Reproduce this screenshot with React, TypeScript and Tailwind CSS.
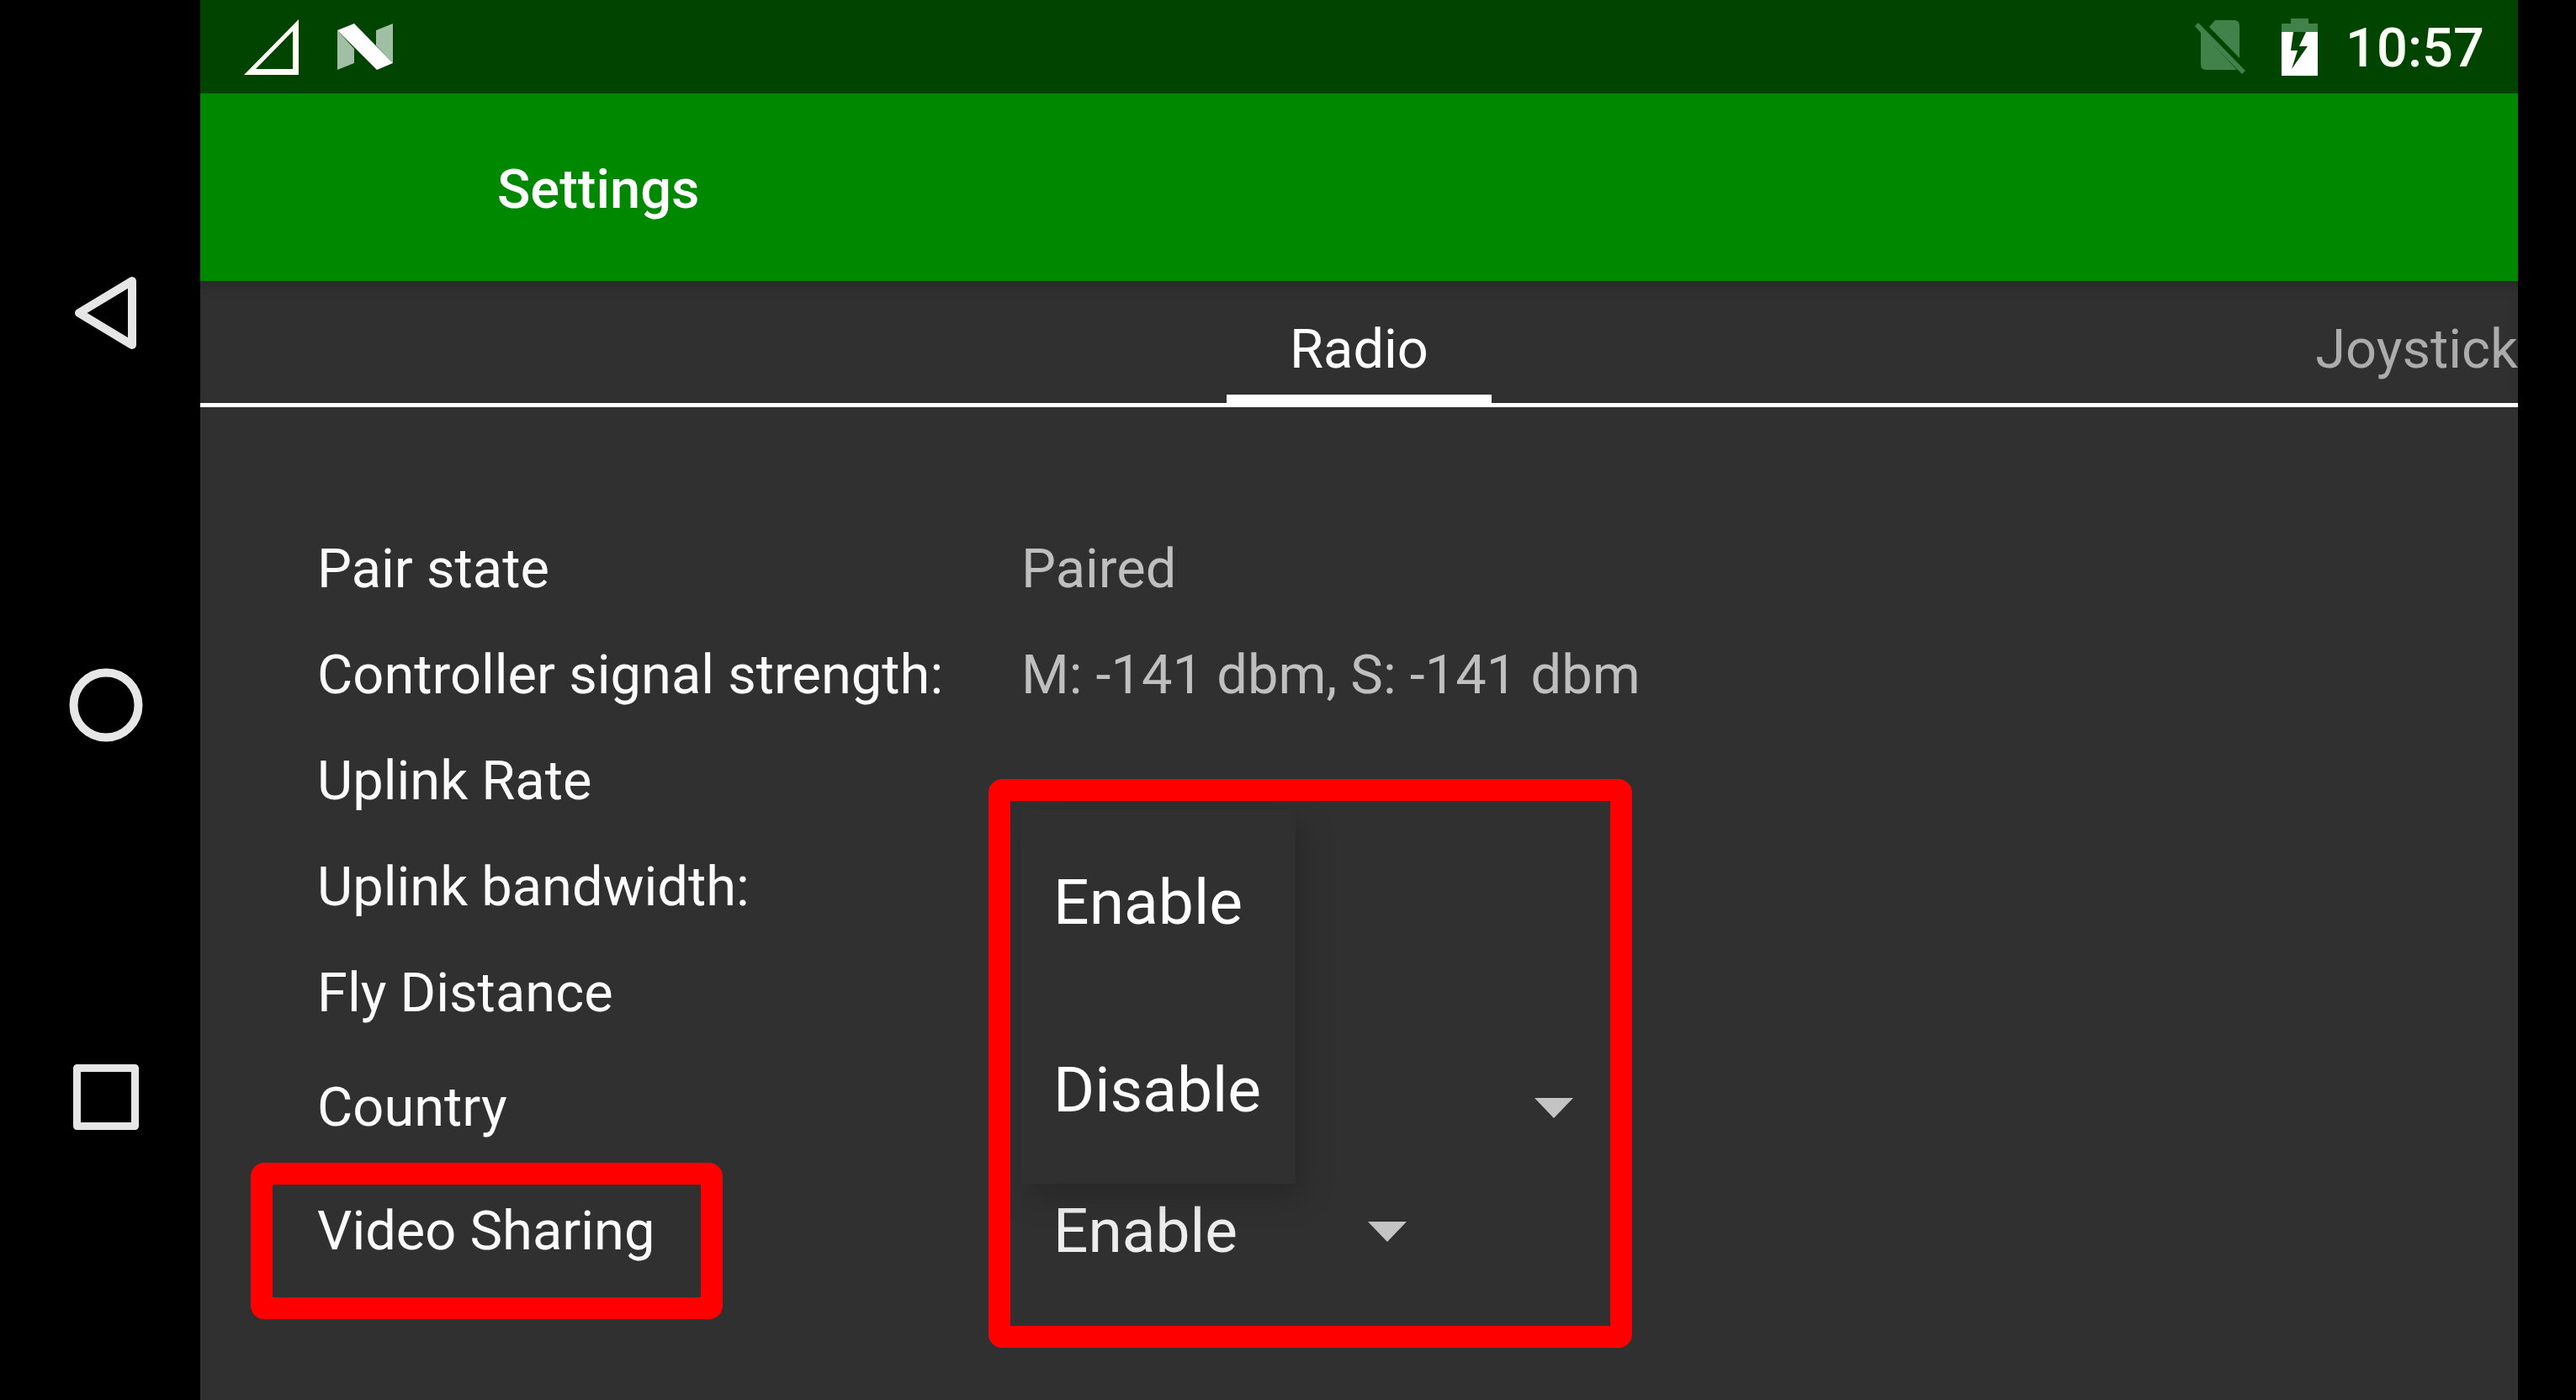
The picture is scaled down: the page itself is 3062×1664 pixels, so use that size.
import { useState, type ReactNode } from "react";

function NoSimIcon() {
  return (
    <svg className="h-16 w-[60px]" viewBox="0 0 60 64" aria-label="No SIM" fill="#41824a">
      <path d="M24 0H47Q53 0 53 7V45L17 8Z" />
      <path d="M7 14L50 59H14Q7 59 7 53Z" />
      <path d="M0 7L4 3L60 60L56 64L50 58L7 15Z" />
    </svg>
  );
}

function BatteryIcon() {
  return (
    <svg className="h-[68px] w-11" viewBox="0 0 44 68" aria-label="Battery charging">
      <path d="M11 0H32V6H43V16H0V6H11Z" fill="#41824a" />
      <path
        d="M0 16H14L11 38H19L12 60L31 33H21L29 16H43V68H0Z"
        fill="#fff"
      />
    </svg>
  );
}

function StatusBar() {
  return (
    <div className="flex h-[111px] items-center justify-between bg-[#004400] pl-[52px] pr-10">
      <div className="flex items-center gap-[46px]">
        <svg className="h-[66px] w-[65px]" viewBox="0 0 65 66" aria-label="Signal">
          <path fillRule="evenodd" d="M65 0V66H0ZM58 14L14 59H58Z" fill="#fffff5" />
        </svg>
        <svg className="h-[55px] w-[66px]" viewBox="0 0 66 55" aria-label="Android N">
          <path d="M0 8L20 30V47L0 55Z" fill="#a0bfa4" />
          <path d="M46 8L66 0V47L46 26Z" fill="#a0bfa4" />
          <path d="M0 8L20 0L66 47L47 55Z" fill="#fff" />
        </svg>
      </div>
      <div className="flex items-center">
        <NoSimIcon />
        <div className="ml-[43px]">
          <BatteryIcon />
        </div>
        <time className="ml-8 pt-[3px] text-[65px] leading-none font-medium text-[#f8fff5]">10:57</time>
      </div>
    </div>
  );
}

function NavRail() {
  const button = "flex flex-1 items-center justify-center pl-3.5";
  return (
    <nav className="flex w-[238px] shrink-0 flex-col bg-black pt-[139px] pb-[127px]">
      <button type="button" aria-label="Back" className={button}>
        <svg className="h-[88px] w-[76px]" viewBox="0 0 76 88" fill="none" stroke="#e6e6e6">
          <path d="M6 44L69 6V82Z" strokeWidth="10" strokeLinejoin="round" />
        </svg>
      </button>
      <button type="button" aria-label="Home" className={button}>
        <svg className="size-[88px]" viewBox="0 0 88 88" fill="none" stroke="#e6e6e6">
          <circle cx="44" cy="44" r="38.5" strokeWidth="10" />
        </svg>
      </button>
      <button type="button" aria-label="Recent apps" className={button}>
        <svg className="size-[78px]" viewBox="0 0 78 78" fill="none" stroke="#e6e6e6">
          <rect x="4.5" y="4.5" width="69" height="69" strokeWidth="9" strokeLinejoin="round" />
        </svg>
      </button>
    </nav>
  );
}

function Tabs() {
  return (
    <div
      role="tablist"
      className="grid h-[150px] grid-cols-3 border-b-[5px] border-white text-[65px] leading-none shadow-[inset_0_12px_12px_-6px_#28282c]"
    >
      <span />
      <button
        type="button"
        role="tab"
        aria-selected="true"
        className="w-[315px] justify-self-center border-b-[10px] border-white pt-[27px] text-white"
      >
        Radio
      </button>
      <button
        type="button"
        role="tab"
        aria-selected="false"
        className="justify-self-end pt-[17px] text-[#acacac]"
      >
        Joystick
      </button>
    </div>
  );
}

function Row({ children, tall = false }: { children: ReactNode; tall?: boolean }) {
  return (
    <div className={`grid grid-cols-[837px_1fr] items-center ${tall ? "h-[147px]" : "h-[126px]"}`}>
      {children}
    </div>
  );
}

function Caret() {
  return (
    <svg
      className="pointer-events-none absolute top-1/2 right-8 h-6 w-[46px] -translate-y-1/2"
      viewBox="0 0 46 24"
      fill="#c4c4c4"
    >
      <path d="M0 0H46L23 24Z" />
    </svg>
  );
}

const selectClass = "h-full w-full appearance-none bg-transparent pl-[38px] text-[73px] leading-none text-[#ededed]";

export default function App() {
  const [sharing, setSharing] = useState("Enable");

  return (
    <div className="flex min-h-screen bg-black pr-[69px] font-[Roboto,sans-serif]">
      <NavRail />
      <div className="flex min-w-0 flex-1 flex-col bg-[#303030]">
        <StatusBar />
        <header className="flex h-[223px] items-center bg-[#008800] pt-1.5 pl-[353px]">
          <h1 className="text-[65px] leading-none font-medium text-white">Settings</h1>
        </header>
        <Tabs />
        <main className="pt-[129px] pl-[139px] text-[65px] leading-none text-[#fbfbfb]">
          <Row>
            <span>Pair state</span>
            <span className="text-[#bfbfbf]">Paired</span>
          </Row>
          <Row>
            <span>Controller signal strength:</span>
            <span className="text-[#bfbfbf]">M: -141 dbm, S: -141 dbm</span>
          </Row>
          <Row>
            <span>Uplink Rate</span>
          </Row>
          <Row>
            <span>Uplink bandwidth:</span>
          </Row>
          <Row>
            <span>Fly Distance</span>
          </Row>
          <Row tall>
            <label htmlFor="country">Country</label>
            <div className="relative h-full w-[688px]">
              <select id="country" className={selectClass}>
                <option value=""></option>
              </select>
              <Caret />
            </div>
          </Row>
          <Row tall>
            <div className="relative flex h-full items-center">
              <label htmlFor="sharing">Video Sharing</label>
              <div className="pointer-events-none absolute -top-2 -bottom-[31px] -left-[79px] w-[561px] rounded-2xl border-[26px] border-[#ff0000]" />
            </div>
            <div className="relative h-full">
              <div className="relative h-full w-[490px]">
                <select
                  id="sharing"
                  className={selectClass}
                  value={sharing}
                  onChange={(e) => setSharing(e.target.value)}
                >
                  <option>Enable</option>
                  <option>Disable</option>
                </select>
                <Caret />
              </div>
              <div
                role="listbox"
                aria-label="Video Sharing"
                className="absolute bottom-[130px] left-0 flex w-[326px] flex-col bg-[#303030] text-[75px] leading-none text-white shadow-[8px_16px_36px_#00000030]"
              >
                {["Enable", "Disable"].map((name) => (
                  <button
                    key={name}
                    type="button"
                    role="option"
                    aria-selected={sharing === name}
                    onClick={() => setSharing(name)}
                    className="h-[223px] pl-[38px] text-left"
                  >
                    {name}
                  </button>
                ))}
              </div>
              <div className="pointer-events-none absolute -bottom-[65px] -left-[39px] h-[676px] w-[765px] rounded-2xl border-[26px] border-[#ff0000]" />
            </div>
          </Row>
        </main>
      </div>
    </div>
  );
}
